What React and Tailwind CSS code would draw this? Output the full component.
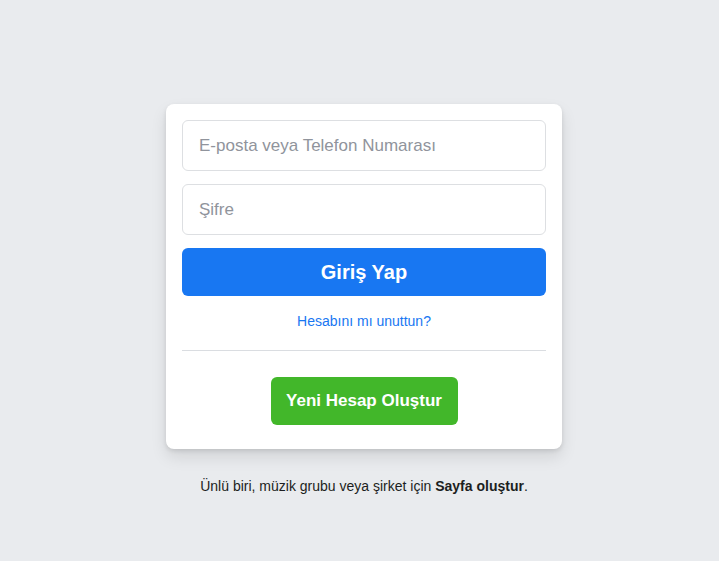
export default function App() {
  return (
    <div className="min-h-screen bg-[#e9ebee] font-['Liberation_Sans',Arial,sans-serif] pt-[104px]">
      <div className="ml-[166px] w-[396px]">
        <form
          onSubmit={(e) => e.preventDefault()}
          className="bg-white rounded-lg px-4 pt-4 pb-6 shadow-[0_2px_4px_rgba(0,0,0,0.1),0_8px_16px_rgba(0,0,0,0.1)] flex flex-col"
        >
          <input
            type="text"
            placeholder="E-posta veya Telefon Numarası"
            className="h-[51px] w-full rounded-md border border-[#dddfe2] px-4 text-[17px] text-[#1d2129] placeholder:text-[#90949c] outline-none"
          />
          <input
            type="password"
            placeholder="Şifre"
            className="mt-[13px] h-[51px] w-full rounded-md border border-[#dddfe2] px-4 text-[17px] text-[#1d2129] placeholder:text-[#90949c] outline-none"
          />
          <button className="mt-[13px] h-12 w-full rounded-md bg-[#1877f2] text-white text-[20px] font-bold">
            Giriş Yap
          </button>
          <a href="#" className="mt-4 block text-center text-sm leading-[18px] text-[#1877f2]">
            Hesabını mı unuttun?
          </a>
          <div className="mt-5 border-b border-[#dadde1]" />
          <div className="mt-[26px] flex justify-center">
            <button type="button" className="h-12 w-[187px] rounded-md bg-[#42b72a] text-white text-[17px] font-bold">
              Yeni Hesap Oluştur
            </button>
          </div>
        </form>
        <p className="mt-7 text-center text-sm leading-[18px] text-[#1c1e21]">
          Ünlü biri, müzik grubu veya şirket için <b className="font-bold">Sayfa oluştur</b>.
        </p>
      </div>
    </div>
  )
}
